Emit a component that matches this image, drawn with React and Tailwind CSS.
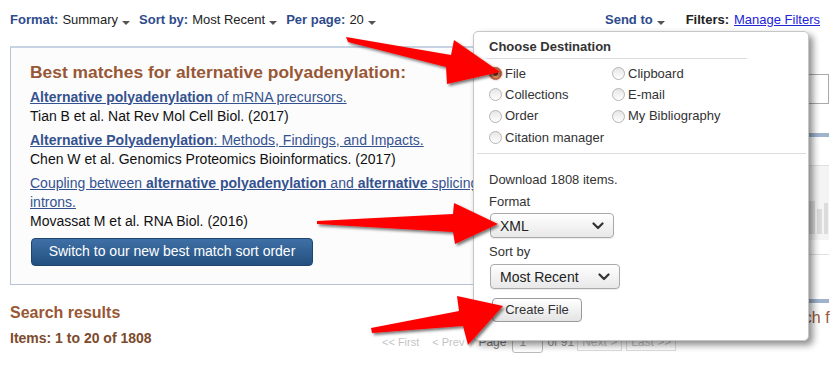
import React from "react";

const Caret = () => (
  <span className="inline-block w-0 h-0 border-l-[4px] border-r-[4px] border-t-[4px] border-l-transparent border-r-transparent border-t-[#555] ml-[4px] align-middle translate-y-[3px]" />
);

const Chevron = () => (
  <svg width="12" height="8" viewBox="0 0 12 8">
    <polyline points="1.5,1.5 6,6 10.5,1.5" fill="none" stroke="#333" strokeWidth="2.2" strokeLinecap="round" strokeLinejoin="round" />
  </svg>
);

const Radio = ({ label, checked }) => (
  <div className="flex items-center h-[21.3px]">
    {checked ? (
      <span className="w-[13px] h-[13px] rounded-full border border-[#a9553a] bg-[radial-gradient(circle,#8f3b22_0_2px,#e8a080_3px,#c9673f_5px)] shadow-[0_0_2px_#e09070]" />
    ) : (
      <span className="w-[13px] h-[13px] rounded-full border border-[#b5b5b5] bg-gradient-to-b from-[#e6e6e6] to-white" />
    )}
    <span className="ml-[3px] text-[13px] text-[#333]">{label}</span>
  </div>
);

const Select = ({ w, value }) => (
  <div className={`${w} h-[25px] rounded-[4px] border border-[#aaa] bg-gradient-to-b from-white to-[#e8e8e8] flex items-center justify-between pl-[9px] pr-[9px] text-[14px] text-[#222] shadow-[0_1px_1px_rgba(0,0,0,0.08)]`}>
    <span>{value}</span>
    <Chevron />
  </div>
);

export default function App() {
  return (
    <div className="relative w-[835px] h-[367px] overflow-hidden bg-white font-['Liberation_Sans',Arial,sans-serif] text-[#222]">
      {/* top bar */}
      <div className="flex items-center pt-[12px] h-[28px] pl-[10px] pr-[15px] text-[13px] leading-[16px]">
        <span className="font-bold text-[#2e4b8c]">Format:</span>
        <span className="ml-[4px]">Summary</span>
        <Caret />
        <span className="ml-[9px] font-bold text-[#2e4b8c]">Sort by:</span>
        <span className="ml-[4px]">Most Recent</span>
        <Caret />
        <span className="ml-[9px] font-bold text-[#2e4b8c]">Per page:</span>
        <span className="ml-[4px]">20</span>
        <Caret />
        <span className="ml-auto font-bold text-[#2e4b8c]">Send to</span>
        <Caret />
        <span className="ml-[21px] font-bold text-[#222]">Filters:</span>
        <span className="ml-[5px] text-[#2323d9] underline">Manage Filters</span>
      </div>

      {/* main */}
      <div className="flex mt-[18px]">
        <div className="w-[760px] pl-[10px] shrink-0">
          <div className="border border-[#b8c4d6] border-t-2 border-t-[#c7d2e2] bg-[#fcfcfd] pt-[14px] pl-[19px] pb-[18px]">
            <div className="text-[17.4px] leading-[20px] font-bold text-[#985735] mb-[5.5px]">
              Best matches for alternative polyadenylation:
            </div>
            <div className="text-[14px] leading-[19px] flex flex-col gap-[5px]">
              <div>
                <div className="text-[#34528f] underline decoration-[#34528f]">
                  <b>Alternative polyadenylation</b> of mRNA precursors.
                </div>
                <div className="text-[#111]">Tian B et al. Nat Rev Mol Cell Biol. (2017)</div>
              </div>
              <div>
                <div className="text-[#34528f] underline decoration-[#34528f]">
                  <b>Alternative Polyadenylation</b>: Methods, Findings, and Impacts.
                </div>
                <div className="text-[#111]">Chen W et al. Genomics Proteomics Bioinformatics. (2017)</div>
              </div>
              <div>
                <div className="text-[#34528f] underline decoration-[#34528f] whitespace-nowrap">
                  Coupling between <b>alternative polyadenylation</b> and <b>alternative</b> splicing is limited to terminal
                  <br />
                  introns.
                </div>
                <div className="text-[#111]">Movassat M et al. RNA Biol. (2016)</div>
              </div>
            </div>
            <div className="mt-[7px] ml-[1px] w-[282px] h-[28px] rounded-[4px] border border-[#1e4470] bg-gradient-to-b from-[#3f70a6] to-[#23507f] flex items-center justify-center text-white text-[14px]">
              Switch to our new best match sort order
            </div>
          </div>

          <div className="mt-[18px] text-[16px] leading-[20px] font-bold text-[#985735]">Search results</div>
          <div className="flex items-start mt-[6px]">
            <div className="w-[372px] text-[14px] leading-[18px] font-bold text-[#7d4a2c]">Items: 1 to 20 of 1808</div>
            <div className="flex items-center mt-[3px] text-[11px] text-[#c4c4c4]">
              <span>&lt;&lt; First</span>
              <span className="ml-[13px]">&lt; Prev</span>
              <span className="ml-[14px] text-[#777] text-[12px]">Page</span>
              <span className="ml-[6px] w-[31px] h-[21px] border border-[#bbb] rounded-[3px] bg-white text-[#999] text-[12px] pl-[6px] leading-[19px]">1</span>
              <span className="ml-[4px] text-[#999] text-[12px]">of 91</span>
              <span className="ml-[3px] border border-[#ddd] px-[4px] h-[18px] leading-[16px] text-[12px] text-[#c4c4c4]">Next &gt;</span>
              <span className="ml-[4px] border border-[#ddd] px-[4px] h-[18px] leading-[16px] text-[12px] text-[#c4c4c4]">Last &gt;&gt;</span>
            </div>
          </div>
        </div>

        {/* right column */}
        <div className="flex-1 pr-[6px] overflow-hidden">
          <div className="mt-[28px] h-[30px] border border-[#aaa] bg-white" />
          <div className="mt-[29px] h-[4px] bg-[#9fb3cc]" />
          <div className="mt-[28px] h-[75px] border-t border-[#e0e0e0] bg-[#f4f4f4] flex items-end justify-end gap-[2px] pb-[6px] pr-[1px]">
            <div className="w-[8px] h-[33px] bg-[#dcdcdc]" />
            <div className="w-[5px] h-[25px] bg-[#dcdcdc]" />
            <div className="w-[4px] h-[31px] bg-[#dcdcdc]" />
          </div>
          <div className="mt-[14px] h-px bg-[#e0e0e0]" />
          <div className="mt-[44px] h-[4px] bg-[#9fb3cc]" />
          <div className="mt-[6px] pl-[10px] text-[16px] leading-[18px] text-[#985735] whitespace-nowrap">Search f</div>
        </div>
      </div>

      {/* dropdown */}
      <div className="absolute left-[473px] top-[31px] w-[336px] h-[310px] bg-white border border-[#c6c6c6] rounded-[5px] shadow-[4px_4px_7px_rgba(0,0,0,0.45)]">
        <div className="pl-[15px] pt-[7px] text-[13px] leading-[16px] font-bold text-[#333]">Choose Destination</div>
        <div className="ml-[12px] w-[261px] mt-[3px] h-px bg-[#dcdcdc]" />
        <div className="pl-[15px] mt-[4px] grid grid-cols-[123px_1fr]">
          <Radio label="File" checked />
          <Radio label="Clipboard" />
          <Radio label="Collections" />
          <Radio label="E-mail" />
          <Radio label="Order" />
          <Radio label="My Bibliography" />
          <Radio label="Citation manager" />
        </div>
        <div className="ml-[3px] mr-[2px] mt-[5px] h-px bg-[#dcdcdc]" />
        <div className="pl-[15px] pt-[18px] text-[13px] leading-[16px] text-[#333]">
          <div>Download 1808 items.</div>
          <div className="mt-[6px]">Format</div>
          <div className="mt-[3px] ml-[1px]">
            <Select w="w-[124px]" value="XML" />
          </div>
          <div className="mt-[6px]">Sort by</div>
          <div className="mt-[4px] ml-[1px]">
            <Select w="w-[130px]" value="Most Recent" />
          </div>
          <div className="mt-[9px] ml-[3px] w-[90px] h-[24px] rounded-[4px] border border-[#9a9a9a] bg-gradient-to-b from-white to-[#e4e4e4] flex items-center justify-center text-[13px] text-[#333]">
            Create File
          </div>
        </div>
      </div>

      {/* arrows */}
      <svg className="absolute inset-0 pointer-events-none" width="835" height="367" viewBox="0 0 835 367">
        <defs>
          <filter id="sh" x="-10%" y="-30%" width="130%" height="160%">
            <feDropShadow dx="2" dy="2" stdDeviation="1.6" floodColor="#000" floodOpacity="0.55" />
          </filter>
        </defs>
        <g fill="#ff0000" filter="url(#sh)">
          <polygon points="346,37 451,55 454,40 500,72 447,84 446,67 348,42" />
          <polygon points="317,221 453,214 454,203 498,224 455,244 453,232 317,224" />
          <polygon points="371,328 459,311 457,296 503,306 468,345 463,326 372,333" />
        </g>
      </svg>
    </div>
  );
}
